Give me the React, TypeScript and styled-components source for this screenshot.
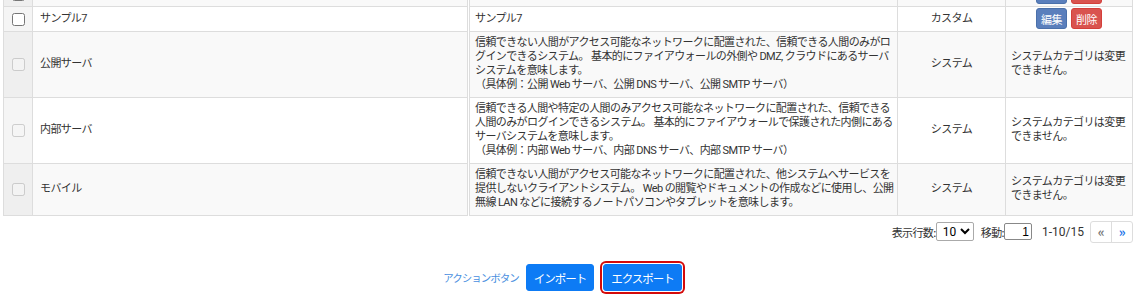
import styled, { createGlobalStyle } from "styled-components";

const Global = createGlobalStyle`
    html, body {
        margin: 0;
        padding: 0;
        background: #fff;
        overflow: hidden;
    }
    body {
        font-family: Roboto, "Noto Sans CJK JP", sans-serif;
        font-size: 11px;
        letter-spacing: -0.6px;
        color: #333;
    }
`

const Page = styled.div`
    width: 1139px;
    height: 302px;
    overflow: hidden;
`

const Table = styled.table`
    width: 1130px;
    margin: -19px 0 0 3px;
    border-collapse: collapse;
    table-layout: fixed;
    border: 1px solid #ddd;
`

const Row = styled.tr<{ $striped?: boolean }>`
    background: ${p => p.$striped ? "#f9f9f9" : "#fff"};
`

const Cell = styled.td<{ $align?: string; $w?: number }>`
    border: 1px solid #ddd;
    padding: 4px 5px 5px;
    line-height: 14px;
    vertical-align: middle;
    white-space: nowrap;
    overflow: hidden;
    text-align: ${p => p.$align || "left"};
    width: ${p => p.$w ? `${p.$w}px` : "auto"};
`

const CheckCell = styled(Cell)`
    width: 18px;
    text-align: center;
    background: rgba(0, 0, 0, 0.04);
    padding: 0 5px;
`

const NameCell = styled(Cell)`
    width: 422px;
    padding-left: 7px;
    border-right: 3px double #ddd;
`

const DescCell = styled(Cell)`
    padding-left: 5px;
`

const Check = styled.input`
    width: 13px;
    height: 13px;
    margin: 0;
    vertical-align: middle;
`

const SmallBtn = styled.button<{ $danger?: boolean }>`
    font-family: "Noto Sans CJK JP", sans-serif;
    font-size: 11px;
    letter-spacing: -0.5px;
    line-height: 14px;
    color: #fff;
    border: 1px solid ${p => p.$danger ? "#d43f3a" : "#4a70aa"};
    background: ${p => p.$danger ? "#d9534f" : "#5a7fbc"};
    border-radius: 3px;
    padding: 2px 4px;
    width: 31px;
    height: 21px;
    margin: 0 2px;
`

const Pager = styled.div`
    display: flex;
    justify-content: flex-end;
    align-items: center;
    margin: 5px 6px 0 0;
    height: 21px;
    font-family: "Noto Sans CJK JP", sans-serif;
    color: #333;
`

const Select = styled.select`
    font-family: Roboto, sans-serif;
    font-size: 12px;
    width: 38px;
    height: 19px;
    padding: 0 0 0 2px;
    border: 1px solid #aaa;
    border-radius: 2px;
    background: #fff;
    margin-right: 7px;
`

const PageInput = styled.input`
    width: 22px;
    height: 13px;
    font-size: 12px;
    text-align: right;
    padding: 1px 2px;
    border: 1px solid #888;
    border-radius: 2px;
    margin-right: 10px;
`

const Count = styled.span`
    font-family: Roboto, sans-serif;
    font-size: 12px;
    letter-spacing: 0;
    margin-right: 6px;
`

const NavGroup = styled.div`
    display: flex;
    border: 1px solid #ddd;
    border-radius: 3px;
    height: 20px;
`

const NavBtn = styled.span<{ $active?: boolean }>`
    width: 20px;
    display: flex;
    align-items: center;
    justify-content: center;
    font-weight: bold;
    font-size: 13px;
    color: ${p => p.$active ? "#1a73e8" : "#777"};
    & + & { border-left: 1px solid #ddd; }
`

const ActionBar = styled.div`
    display: flex;
    justify-content: center;
    align-items: center;
    gap: 7px;
    margin-top: 22px;
    padding-right: 12px;
    font-family: "Noto Sans CJK JP", sans-serif;
`

const ActionLink = styled.span`
    color: #4a8fe0;
    font-size: 10.5px;
    letter-spacing: -1px;
`

const MainBtn = styled.button<{ $focused?: boolean }>`
    font-family: "Noto Sans CJK JP", sans-serif;
    font-size: 11.5px;
    letter-spacing: -1px;
    color: #fff;
    background: #0d7bf5;
    border: 1px solid #0d7bf5;
    border-radius: 3px;
    height: 27px;
    padding: 0 7px;
    margin: 0 ${p => p.$focused ? "2px" : "0"};
    box-shadow: ${p => p.$focused ? "0 0 0 1px #fff, 0 0 0 3px #d40a0a" : "none"};
`

type Item = {
    name: string;
    desc: string[];
    type: string;
    custom?: boolean;
}

const items: Item[] = [
    { name: "サンプル6", desc: ["サンプル6"], type: "カスタム", custom: true },
    { name: "サンプル7", desc: ["サンプル7"], type: "カスタム", custom: true },
    {
        name: "公開サーバ",
        desc: [
            "信頼できない人間がアクセス可能なネットワークに配置された、信頼できる人間のみがロ",
            "グインできるシステム。 基本的にファイアウォールの外側や DMZ, クラウドにあるサーバ",
            "システムを意味します。",
            "（具体例：公開 Web サーバ、公開 DNS サーバ、公開 SMTP サーバ）",
        ],
        type: "システム",
    },
    {
        name: "内部サーバ",
        desc: [
            "信頼できる人間や特定の人間のみアクセス可能なネットワークに配置された、信頼できる",
            "人間のみがログインできるシステム。 基本的にファイアウォールで保護された内側にある",
            "サーバシステムを意味します。",
            "（具体例：内部 Web サーバ、内部 DNS サーバ、内部 SMTP サーバ）",
        ],
        type: "システム",
    },
    {
        name: "モバイル",
        desc: [
            "信頼できない人間がアクセス可能なネットワークに配置された、他システムへサービスを",
            "提供しないクライアントシステム。 Web の閲覧やドキュメントの作成などに使用し、公開",
            "無線 LAN などに接続するノートパソコンやタブレットを意味します。",
        ],
        type: "システム",
    },
]

const App = () => {
    return (
        <>
            <Global />
            <Page>
                <Table>
                    <tbody>
                        {items.map((it, i) => (
                            <Row key={it.name} $striped={i % 2 === 0}>
                                <CheckCell>
                                    <Check type="checkbox" disabled={!it.custom} />
                                </CheckCell>
                                <NameCell>{it.name}</NameCell>
                                <DescCell>
                                    {it.desc.map((l, j) => (
                                        <div key={j}>{l}</div>
                                    ))}
                                </DescCell>
                                <Cell $w={97} $align="center">{it.type}</Cell>
                                {it.custom ? (
                                    <Cell $w={116} $align="center" style={{ padding: "1px 5px 2px" }}>
                                        <SmallBtn>編集</SmallBtn>
                                        <SmallBtn $danger>削除</SmallBtn>
                                    </Cell>
                                ) : (
                                    <Cell $w={116}>
                                        <div>システムカテゴリは変更</div>
                                        <div>できません。</div>
                                    </Cell>
                                )}
                            </Row>
                        ))}
                    </tbody>
                </Table>
                <Pager>
                    表示行数:
                    <Select defaultValue="10">
                        <option value="10">10</option>
                    </Select>
                    移動:
                    <PageInput defaultValue="1" />
                    <Count>1-10/15</Count>
                    <NavGroup>
                        <NavBtn>«</NavBtn>
                        <NavBtn $active>»</NavBtn>
                    </NavGroup>
                </Pager>
                <ActionBar>
                    <ActionLink>アクションボタン</ActionLink>
                    <MainBtn>インポート</MainBtn>
                    <MainBtn $focused>エクスポート</MainBtn>
                </ActionBar>
            </Page>
        </>
    );
}

export default App;
